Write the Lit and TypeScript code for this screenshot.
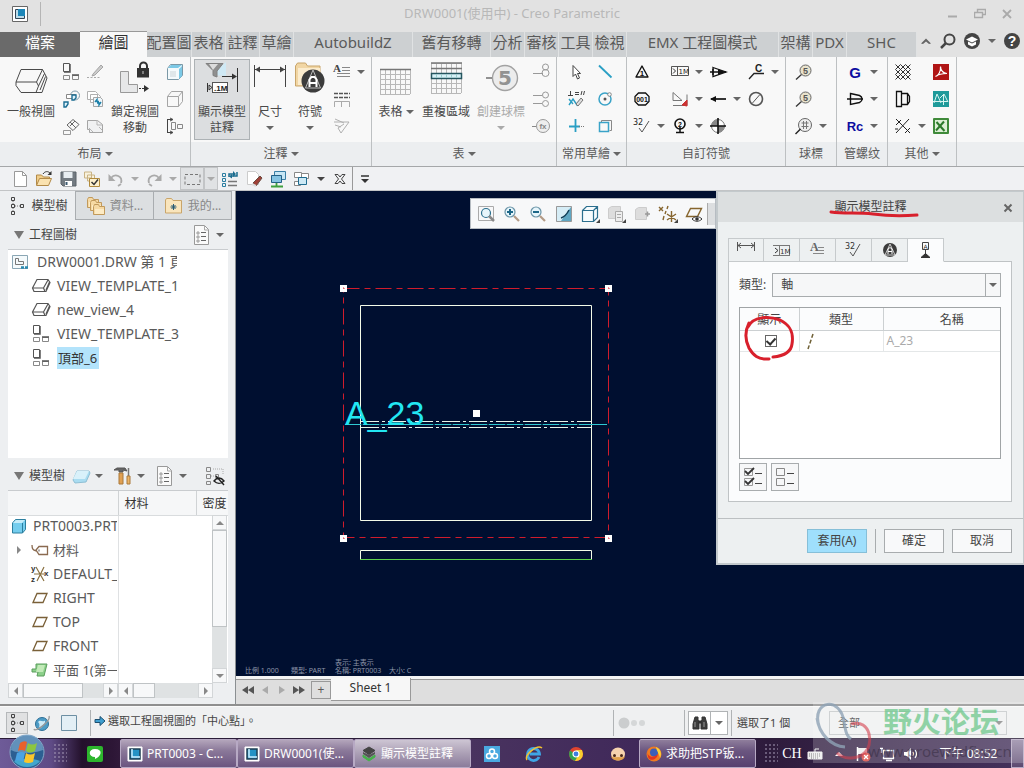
import { LitElement, html, css, svg, nothing } from "lit";
import { customElement, state } from "lit/decorators.js";

const pic = (w: number, h: number, body: unknown) =>
  html`<svg width=${w} height=${h} viewBox="0 0 ${w} ${h}" fill="none" stroke="#555" aria-hidden="true">${body}</svg>`;

const arrow = (color = "#666") => pic(8, 4, svg`<path d="M0 0h8l-4 4z" fill=${color} stroke="none"/>`);

const gridLines = (x0: number, y0: number, cols: number, rows: number, step: number) => {
  const w = cols * step;
  const h = rows * step;
  let d = "";
  for (let i = 0; i <= cols; i++) d += `M${x0 + i * step + 0.5} ${y0}v${h}`;
  for (let j = 0; j <= rows; j++) d += `M${x0} ${y0 + j * step + 0.5}h${w}`;
  return svg`<path d=${d} stroke="#b8b8b8"/>`;
};

const tanFolder = (x: number, y: number) => svg`<g transform="translate(${x} ${y})">
  <path d="M.5 2.500l1-2h4l1 2h5v8h-11z" fill="#f6d9a3" stroke="#c19a5c"/><path d="M2 5h9v5h-9z" fill="#fdebc4" stroke="none"/></g>`;

const big: Record<string, unknown> = {
  view: svg`<path d="M7 22l5-12.500h21.500l4.500 8.500-5 14.500h-21l-5-7zM7 22h20.500l6-12.500M27.500 22l2 4-2.500 6.500M29.500 26l6-12.500M31 30l5.500-13.500" stroke="#4a4a4a"/>`,
  lock: svg`<path d="M7.500 11.500h8v13h9v8h-17z" fill="#e6e7e8" stroke="#999"/>
    <path d="M27 9v-3a3.500 3.500 0 0 1 7 0v3" stroke="#333" stroke-width="2"/><path d="M24 8h12v9.500h-12z" fill="#333" stroke="none"/><path d="M30 11v3" stroke="#ccc"/>
    <path d="M26 28.500h6" stroke="#333" stroke-dasharray="2 1"/><path d="M31 25l5 3.500-5 3.500z" fill="#333" stroke="none"/>`,
  showAnno: svg`<path d="M12 15l14-13v14z" fill="#cfe9f5" stroke="none"/>
    <path d="M6 3.500h17l-6 7.500v6l-4-1.500v-5z" fill="#8f8f8f" stroke="#808080"/><path d="M9 4h9l-5 6z" fill="#dcdcdc" stroke="none"/>
    <path d="M22 16.500h14M37.500 8v24" stroke="#333"/><path d="M32 13.500l5 3-5 3z" fill="#333" stroke="none"/>
    <path d="M7.500 23v9M9 25l3 2.500-3 2.500z" stroke="#333"/><rect x="12.500" y="22.500" width="15" height="10" fill="#fff" stroke="#555"/>
    <text x="14" y="31" font-size="8" font-weight="700" fill="#222" stroke="none" font-family="Liberation Sans">.1M</text>`,
  dim: svg`<path d="M6.500 5v22M37.500 5v22M7 9.500h30" stroke="#444"/><path d="M7 9.500l5-3v6zM37 9.500l-5-3v6z" fill="#444" stroke="none"/>`,
  symbol: svg`<path d="M7.500 26v-20l2-3h8l2 3h12.500v20z" fill="#f1d6a4" stroke="#c9a56a"/><path d="M10 8h22v17h-22z" fill="#fbecce" stroke="none"/>
    <circle cx="25" cy="21" r="11.500" fill="#3c3c3c" stroke="none"/><path d="M25 10l7.500 18h-15z" fill="#3c3c3c" stroke="#bbb"/>
    <path d="M21.500 27v-7.500l2-2.500h3l2 2.500v7.500M21.500 23h7" stroke="#fff" stroke-width="2"/>`,
  table: svg`${gridLines(6, 9, 6, 5, 5)}<path d="M6 9.500h31" stroke="#777" stroke-width="1.500"/>`,
  region: svg`${gridLines(7, 3, 6, 6, 5)}<path d="M7 3h31M7 8.500h31" stroke="#777" stroke-width="1.500"/><rect x="7.500" y="13.500" width="30" height="5" fill="#d6f1f7" stroke="#25555f" stroke-width="1.500"/><path d="M12.500 14v4M17.500 14v4M22.500 14v4M27.500 14v4M32.500 14v4" stroke="#9cc"/>`,
  balloon: svg`<circle cx="26" cy="18" r="12.500" fill="#ececec" stroke="#a2a2a2" stroke-width="1.400"/><path d="M7 18h6" stroke="#777" stroke-width="1.600"/>
    <text x="26" y="25" font-size="20" font-weight="700" fill="#929292" stroke="none" text-anchor="middle" font-family="DejaVu Sans">5</text>`,
};

const txt = (x: number, y: number, size: number, fill: string, s: string) =>
  svg`<text x=${x} y=${y} font-size=${size} font-weight="700" fill=${fill} stroke="none" text-anchor="middle" font-family="Liberation Sans">${s}</text>`;

const small: Record<string, unknown> = {
  proj: svg`<path d="M2.500 1.500h6v8h-6z"/><path d="M2.500 13.500h6v4h-6zM11.500 13.500h6v4h-6z" stroke="#888"/><path d="M9 2v8h-6M11 13h7" stroke="#555" stroke-width="1.500"/>`,
  pencil: svg`<path d="M2 15.500h14" stroke="#aaa" stroke-dasharray="2 1.500"/><path d="M8 12l8-9 2 2-8 8-3 1z" fill="#ccc" stroke="#a5a5a5"/>`,
  detail: svg`<circle cx="14" cy="6.500" r="4.500" stroke="#7b9aab"/><path d="M5.500 5.500h9v4h-9z" fill="#fff" stroke="#888"/><path d="M11 6h4v3l-2 2h-2zM3 13h4v2l-2 3h-2z" fill="#dff2fa" stroke="#1b6d93" stroke-width="1.400"/>`,
  sheets: svg`<path d="M2.500 2.500h8l2 2v6h-10zM5.500 5.500h8l2 2v6h-10z" fill="#fff" stroke="#b0b0b0"/><path d="M8.500 8.500h7l2 2v7h-9z" fill="#eef6fa" stroke="#a5a5a5"/><path d="M10 13l2-2.500v2h2M16 13l-2 3v-2h-2" stroke="#1b7fa8" stroke-width="1.400"/>`,
  aux: svg`<path d="M12 3.500l6 5-6 6-6-5.500zM9 6l6 6M14 5l-5 5" stroke="#666"/><path d="M2.500 14.500h7v4h-7z" stroke="#999"/>`,
  erase: svg`<path d="M2.500 4.500h10l5 4v8h-13v-3h-2z" fill="#f0f1f2" stroke="#a5a5a5"/><path d="M12 4v5h5M4 12l4 4M14 11l3 3" stroke="#b5b5b5"/>`,
  cubeB: svg`<path d="M2.500 6.500l3-4h12v11l-4 4h-11z" fill="#f4fafc" stroke="#7b98a6"/><path d="M3 6l3-3h11l-4 3zM14 7l3-3v10l-3 3z" fill="#7cc9e6" stroke="none"/><path d="M5 9h6v6h-6z" fill="#dfe7ea" stroke="none"/>`,
  cube: svg`<path d="M2.500 7.500l4-5h11v10l-4 5h-11zM2.500 7.500h11v10M13.500 7.500l4-5" stroke="#a5a5a5"/>`,
  align: svg`<path d="M2.500 3v14M2 3.500h5M2 16.500h5M5 2l3 1.500-3 1.500M5 15l3 1.500-3 1.500" stroke="#444"/><path d="M6.500 6.500h4v7h-4zM12.500 8.500h5v4h-5z" stroke="#888"/>`,
  note: svg`<text x="1" y="10" font-size="11" font-weight="700" fill="#444" stroke="none" font-family="Liberation Serif">A</text><path d="M10 5.500h8M10 8.500h8M5 11.500h13M5 14.500h13" stroke="#888"/>`,
  tbl: svg`<path d="M2 4.500h16M2 8.500h16" stroke="#555" stroke-width="1.500" stroke-dasharray="4 1"/><path d="M2.500 18v-5.500h15v5.500M9.500 13v5" stroke="#aaa"/>`,
  surf: svg`<path d="M2 6h15l-8 11-3-5 6-4M3 3l9 4M3 9l6 2" stroke="#b0b0b0"/>`,
  b1: svg`<path d="M1 11.500h10" stroke="#999"/><circle cx="13.500" cy="5" r="3" stroke="#999"/><circle cx="13.500" cy="11" r="3.500" stroke="#999"/>`,
  b2: svg`<path d="M1 6.500h9M1 14.500h9" stroke="#999"/><circle cx="13.500" cy="6" r="3" stroke="#999"/><circle cx="13.500" cy="14.500" r="3" stroke="#999"/>`,
  b3: svg`<path d="M0 10.500h4" stroke="#888"/><circle cx="11" cy="10" r="6.500" fill="#eee" stroke="#999"/>${txt(11, 13, 8, "#888", "fx")}`,
  cursor: svg`<path d="M7 3.500v11l2.500-2.500 2 5 2-1-2-4.500h3z" fill="#fff" stroke="#444"/>`,
  line: svg`<path d="M4 3.500l12.500 12" stroke="#2a9fc4" stroke-width="1.800"/>`,
  constr: svg`<path d="M2 6.500h5M4.500 2v4M9 3.500h4M9 5.500h4M15 6l1-4M17.500 6l1-4" stroke="#444"/><path d="M3 16l4-6 4 6 2-4M3 10l4 5" stroke="#2a9fc4" stroke-width="1.400"/><path d="M10 15l5-6 2 2-5 6z" fill="#ddd" stroke="#777"/>`,
  circ: svg`<circle cx="10" cy="10" r="6" stroke="#3aa3c8" stroke-width="1.500"/><circle cx="10" cy="10" r="1.500" fill="#555" stroke="none"/><circle cx="14.500" cy="5.500" r="1.800" fill="#f8f8f8" stroke="#888"/>`,
  cross: svg`<path d="M9.500 3v13M3 10.500h11" stroke="#2a9fc4" stroke-width="1.800"/><path d="M13 10.500h6" stroke="#777" stroke-dasharray="1 1"/>`,
  sq: svg`<path d="M4.500 6.500h9v9h-9z" stroke="#3aa3c8" stroke-width="1.500"/><path d="M6.500 6v-1.500h10v10h-2" stroke="#888"/>`,
  tri1: svg`<path d="M10 4l6 11h-12z" stroke="#111" stroke-width="1.400" stroke-linejoin="round"/>${txt(10, 14, 8, "#111", "1")}`,
  c001: svg`<path d="M6.500 4h7l3.500 3.500v5l-3.500 3.500h-7l-3.500-3.500v-5z" stroke="#111" stroke-width="1.300"/>${txt(10, 13, 7, "#111", "001")}`,
  s32: svg`<text x="1" y="9" font-size="8" fill="#222" stroke="none" font-family="DejaVu Sans">32</text><path d="M7 12l3 4 7-11" stroke="#555"/>`,
  gtol: svg`<path d="M1.500 4.500h17v9h-17zM7.500 5v8" stroke="#555"/><path d="M3 6.500l2.500 2.500-2.500 2.500" stroke="#333"/><text x="8.500" y="12" font-size="7" fill="#222" stroke="none" font-family="DejaVu Sans">1M</text>`,
  corner: svg`<path d="M3 3.500l9 8h-9zM3 16.500h14v-11" stroke="#777"/><path d="M12 16l5-5v6z" fill="#c33" stroke="#c33"/>`,
  datum: svg`<circle cx="10" cy="8" r="5" stroke="#111" stroke-width="1.600"/><path d="M6 16.500h8M10 11v5" stroke="#111" stroke-width="1.500"/>${txt(10, 11, 7, "#111", "2")}`,
  arr3: svg`<path d="M2 10h16M5 7v6" stroke="#111" stroke-width="1.500"/><path d="M5 5.500l13 4.500-13 4.500z" stroke="#111" stroke-width="1.300"/><path d="M10 7l7 3-7 3z" fill="#111" stroke="none"/>`,
  arrL: svg`<path d="M3 10h15" stroke="#111" stroke-width="1.700"/><path d="M2 10l6-3v6z" fill="#111" stroke="none"/>`,
  target: svg`<circle cx="10" cy="10" r="6.500" fill="#fff" stroke="#777"/><path d="M10 3.500a6.500 6.500 0 0 0-6.500 6.500h6.500zM10 16.500a6.500 6.500 0 0 0 6.500-6.500h-6.500z" fill="#888" stroke="none"/><path d="M10 2v16M2 10h16" stroke="#111" stroke-width="1.600"/>`,
  clead: svg`<path d="M3 17l5-5.500h10" stroke="#222" stroke-width="1.300"/><text x="9" y="10" font-size="10" font-weight="700" fill="#222" stroke="none" font-family="Liberation Sans">C</text>`,
  diam: svg`<circle cx="10" cy="10" r="6.500" stroke="#555" stroke-width="1.600"/><path d="M6.500 14l7-8" stroke="#555"/>`,
  mag5: svg`<circle cx="11.500" cy="8.500" r="5.500" fill="#e9e3cd" stroke="#666"/><path d="M7.500 12.500l-5.500 5" stroke="#333" stroke-width="1.300"/>${txt(11.5, 12, 9, "#555", "5")}`,
  magh: svg`<circle cx="11" cy="9" r="6.500" fill="#eee" stroke="#666"/><path d="M6.500 13l-5 5" stroke="#222" stroke-width="1.500"/><path d="M7.500 7h7M7.500 10.500h7M9.500 5v8M12.500 5v8" stroke="#777"/>`,
  g: txt(10, 15.5, 15, "#0d0da0", "G"),
  cone: svg`<path d="M2 10h16" stroke="#111" stroke-width="1.500"/><path d="M5.500 4.500l9 2a5 4 0 0 1 0 7l-9 2z" stroke="#111" stroke-width="1.400"/>`,
  rc: txt(10, 15, 13, "#0d0da0", "Rc"),
  hatch: svg`<path d="M2.500 7.500l5-5M2.500 12.500l10-10M2.500 17.500l15-15M7.500 17.500l10-10M12.500 17.500l5-5M12.500 2.500l5 5M7.500 2.500l10 10M2.500 2.500l15 15M2.500 7.500l10 10M2.500 12.500l5 5" stroke="#333"/>`,
  plate: svg`<path d="M3.500 2.500h5v15h-5zM8.500 4.500h6l2 3v5l-2 3h-6M14.500 5v10" stroke="#111" stroke-width="1.300"/>`,
  multi: svg`<path d="M3 9l5-5M3 17l13-14M12 17l5-5M3 3l5 5M8 8l9 9" stroke="#222"/><path d="M2 13h3" stroke="#222"/>`,
  pdf: svg`<rect x="2" y="2" width="16" height="16" fill="#b01515" stroke="none"/><path d="M4.500 14.500c3-1 5.500-5 5-10 0 4 3 7 6.500 7-4 0-8 .5-11.500 3" stroke="#fff" stroke-width="1.200"/>`,
  teal: svg`<rect x="2" y="2" width="16" height="16" fill="#1e9a9a" stroke="none"/><path d="M3 14l3-9 4 9M2 12.500h15M12.500 5v11M9 9l4-4 4 8" stroke="#d5f4f0"/>`,
  xls: svg`<rect x="2" y="2" width="16" height="16" rx="1" fill="#3f8a3a" stroke="none"/><path d="M4 4h12v12h-12z" fill="#dcefd5" stroke="none"/><path d="M5.500 6l8 9M13 5.500l-8 9" stroke="#2c7a2b" stroke-width="2"/>`,
  newDoc: svg`<path d="M4.500 2.500h8l4 4v11h-12z" fill="#fff" stroke="#999"/><path d="M12.500 2.500v4h4" stroke="#999"/>`,
  open: svg`<path d="M2.500 16v-10h5l2 2h6v2" fill="#f0cd8a" stroke="#b28a48"/><path d="M2.500 16.500l3-7h12l-3 7z" fill="#fae2b0" stroke="#b28a48"/><path d="M9 5c2-3 5-3 7-1" stroke="#333"/><path d="M17.500 2v4h-4z" fill="#333" stroke="none"/>`,
  save: svg`<path d="M3 3h15v14h-13l-2-2z" fill="#737b82" stroke="#5a6268"/><path d="M5.500 3h9v6h-9z" fill="#e8eef2" stroke="none"/><path d="M7 12h7v5h-7z" fill="#fff" stroke="none"/><path d="M8.500 13v3" stroke="#3c5a70" stroke-width="2"/>`,
  saveAs: svg`<path d="M2.500 9v-6h7v6zM5.500 12v-6h7v6z" fill="#f8f1dd" stroke="#c9b384"/><path d="M7.500 9.500h10v8h-10z" fill="#fdf0cc" stroke="#b08a3d"/><path d="M9.500 13l2.500 2.500 4-5" stroke="#333" stroke-width="1.500"/>`,
  undo: svg`<path d="M5 9c4-5 12-2 10 5M15 15l-3 2" stroke="#aaa" stroke-width="1.800"/><path d="M2.500 5v7h7z" fill="#aaa" stroke="none"/>`,
  redo: svg`<path d="M15 9c-4-5-12-2-10 5M5 15l3 2" stroke="#aaa" stroke-width="1.800"/><path d="M17.500 5v7h-7z" fill="#aaa" stroke="none"/>`,
  marquee: svg`<path d="M3 5.500h15v10h-15z" stroke="#777" stroke-dasharray="3 2"/>`,
  regen: svg`<path d="M2.500 4.500h3v3h-3zM2.500 9.500h3v3h-3zM2.500 14.500h3v3h-3z" stroke="#2a7da0"/><path d="M9 8v-3h5M17 3v4h-5" stroke="#1d6d90" stroke-width="1.500"/><path d="M13 2l3 3-3 3zM12 5l-3 2.500 3 2z" fill="#1d6d90" stroke="none"/><path d="M8 12.500h9M8 16.500h9" stroke="#777" stroke-width="1.500"/>`,
  rub: svg`<path d="M3.500 2.500h8l3 3v10h-11z" fill="#fff" stroke="#ccc"/><path d="M9 14l7-7 2 2-6 8z" fill="#a04038" stroke="#6b4a40"/><path d="M8 15l4 2" stroke="#ddd" stroke-width="2"/>`,
  win: svg`<path d="M6.500 2.500h11v8h-11z" fill="#c8e6f4" stroke="#3a7fa5"/><path d="M3.500 6.500h10v7h-10z" fill="#85c3e2" stroke="#235f85"/><path d="M8.500 14v3M3 17.500h12" stroke="#3d9f3d" stroke-width="1.800"/>`,
  winds: svg`<path d="M2.500 3.500h7v5h-7zM2.500 12.500h6v4h-6z" fill="#fff" stroke="#888"/><path d="M9.500 4.500h7v5h-7z" fill="#fff" stroke="#888"/><path d="M6.500 8.500h8v7h-8z" fill="#cde9f5" stroke="#1f6c90"/>`,
  closeW: svg`<path d="M5 5.500h3l2 2.500 2-2.500h3l-3.500 4.500 3.500 4.500h-3l-2-2.500-2 2.500h-3l3.500-4.500z" stroke="#444"/>`,
  more: svg`<path d="M6 7h8" stroke="#333" stroke-width="1.500"/><path d="M6 10h8l-4 4z" fill="#333" stroke="none"/>`,
  tree: svg`<path d="M4.500 1.500h3v3h-3zM4.500 8.500h3v3h-3zM4.500 15.500h3v3h-3zM13.500 8.500h3v3h-3z" stroke="#444"/><path d="M6 5v3M6 12v3M8 10h5" stroke="#777" stroke-dasharray="1 1"/>`,
  folders: svg`${tanFolder(1, 1)}${tanFolder(4, 4)}${tanFolder(7, 8)}`,
  fav: svg`<path d="M1.500 17v-13l1-1.500h5l1.500 2h8.500v12.500z" fill="#f9e5bc" stroke="#c9a56a"/><path d="M9.500 8v6M6.500 11h6M7.500 9l4 4M11.500 9l-4 4" stroke="#275a75"/>`,
  list: svg`<path d="M2.500 .5h10l4 4v15h-14z" fill="#fafafa" stroke="#999"/><path d="M12.500 1v4h4" stroke="#aaa"/><path d="M9 7.500h5M9 11.500h5M9 15.500h5" stroke="#666"/><path d="M5 7h2v2h-2zM5 11h2v2h-2zM5 15h2v2h-2z" stroke="#888" stroke-width=".8"/>`,
  drw: svg`<path d="M2.500 3.500h15v13h-15z" fill="#f4fafc" stroke="#8aa6b4"/><path d="M5.500 6.500h3v3h5v3h-8z" stroke="#777"/><path d="M11 15.500h7" stroke="#2a8ab0" stroke-width="2.500" stroke-dasharray="3 1"/>`,
  vbox: svg`<path d="M1.500 12l4.500-8.500h11l2 3-4 9h-12zM2 12h10.500l4.500-8M12.500 12l1.500 3.500M15 14l3.500-8" stroke="#555" stroke-width="1.200"/>`,
  solid: svg`<path d="M2 14l4-9h12l1 2-4 9-11 1z" fill="#a9dcf1" stroke="#8fbfd4"/><path d="M6 5h12l-4 8h-12z" fill="#d9f1fa" stroke="none"/>`,
  tools: svg`<path d="M1 4l3-2h8l2 3-4-1v2h-4v-2h-3z" fill="#666" stroke="#555"/><path d="M6 7h4v11h-4z" fill="#e0a052" stroke="#a9793a"/><path d="M15.500 2v8" stroke="#777" stroke-width="1.500"/><path d="M14 10h3v8h-3z" fill="#ecb568" stroke="#a9793a"/>`,
  treeEye: svg`<path d="M1.500 1.500h4v4h-4zM1.500 8.500h4v4h-4zM1.500 15.500h4v3h-4zM10.500 8.500h3v3h-3z" stroke="#888"/><path d="M6 10h4M8 3h10M18 3v6" stroke="#aaa" stroke-dasharray="1 1"/><path d="M9 15c3-4 7-4 10 0-3 3-7 3-10 0zM11 10l8 9" stroke="#222" stroke-width="1.400"/>`,
  part: svg`<path d="M3.500 7l3-3.500h10v10l-3 3.500h-10z" fill="#74cdee" stroke="#2c7f9f"/><path d="M4 7l3-3h9l-3 3z" fill="#c5ecf9" stroke="none"/><path d="M13.500 7v10" stroke="#2c7f9f"/>`,
  mat: svg`<path d="M2 5c0 4 1 5 4 6M6 10l3-3.500h8.500v8h-8.500z" stroke="#8a6a50" stroke-width="1.300"/><path d="M9 9.500v2" stroke="#555"/>`,
  csys: svg`<path d="M6 3l8 14M14 3l-7 14M4 10h11" stroke="#8a7040" stroke-width="1.200"/><text x="1" y="7" font-size="8" font-weight="700" fill="#333" stroke="none" font-family="Liberation Sans">y</text><text x="14" y="12" font-size="8" font-weight="700" fill="#333" stroke="none" font-family="Liberation Sans">x</text><text x="1" y="18" font-size="8" font-weight="700" fill="#333" stroke="none" font-family="Liberation Sans">z</text>`,
  plane: svg`<path d="M3 14.500l4-9h10l-4 9z" stroke="#7a6038" stroke-width="1.300"/>`,
  flat: svg`<path d="M6 4h11l-3 12h-7l1-4h-6v-3h4z" fill="#8cd08a" stroke="#5a9d5c"/><path d="M8 5h7l-2 7h-7z" fill="#c2eab8" stroke="none"/>`,
};

const sm = (n: string) => html`<svg width="20" height="20" viewBox="0 0 20 20" fill="none" stroke="#555" aria-hidden="true">${small[n]}</svg>`;
const lg = (n: string) => html`<svg width="44" height="40" viewBox="0 0 44 40" fill="none" stroke="#555" aria-hidden="true">${big[n]}</svg>`;

const base = css`
  * { box-sizing: border-box; }
  button, select, input {
    font: inherit; color: inherit; margin: 0; padding: 0; border: 0; border-radius: 0; background: none;
  }
  button { display: flex; align-items: center; justify-content: center; white-space: nowrap; flex: none; }
  svg { display: block; flex: none; }
`;

type Cell = [string, boolean?];
type Item =
  | { big: string; w: string; lines: string[]; drop?: "inline" | "below"; on?: boolean; off?: boolean }
  | { col: (Cell | null)[]; drops?: boolean };

const groups: { name: string; drop: boolean; pad: string; items: Item[] }[] = [
  { name: "布局", drop: true, pad: "p3", items: [
    { big: "view", w: "w56", lines: ["一般視圖"] },
    { col: [["proj"], ["detail"], ["aux"]] },
    { col: [["pencil"], ["sheets"], ["erase"]] },
    { big: "lock", w: "w56", lines: ["鎖定視圖", "移動"] },
    { col: [["cubeB"], ["cube"], ["align"]] },
  ] },
  { name: "注釋", drop: true, pad: "p3", items: [
    { big: "showAnno", w: "w56", lines: ["顯示模型", "註釋"], on: true },
    { big: "dim", w: "w40", lines: ["尺寸"], drop: "below" },
    { big: "symbol", w: "w40", lines: ["符號"], drop: "below" },
    { col: [["note", true], ["tbl"], ["surf"]], drops: true },
  ] },
  { name: "表", drop: true, pad: "p0", items: [
    { big: "table", w: "w48", lines: ["表格"], drop: "inline" },
    { big: "region", w: "w52", lines: ["重複區域"] },
    { big: "balloon", w: "w60", lines: ["創建球標"], drop: "below", off: true },
    { col: [["b1"], ["b2"], ["b3"]] },
  ] },
  { name: "常用草繪", drop: true, pad: "p8", items: [
    { col: [["cursor"], ["constr"], ["cross"]] },
    { col: [["line"], ["circ"], ["sq"]] },
  ] },
  { name: "自訂符號", drop: false, pad: "p3", items: [
    { col: [["tri1"], ["c001"], ["s32", true]], drops: true },
    { col: [["gtol", true], ["corner", true], ["datum", true]], drops: true },
    { col: [["arr3"], ["arrL", true], ["target"]], drops: true },
    { col: [["clead", true], ["diam"], null], drops: true },
  ] },
  { name: "球標", drop: false, pad: "p6", items: [{ col: [["mag5"], ["mag5"], ["magh", true]], drops: true }] },
  { name: "管螺纹", drop: false, pad: "p6", items: [{ col: [["g", true], ["cone", true], ["rc", true]], drops: true }] },
  { name: "其他", drop: true, pad: "p3", items: [
    { col: [["hatch"], ["plate"], ["multi", true]], drops: true },
    { col: [["pdf"], ["teal"], ["xls"]] },
  ] },
];

const tabs: [string, string][] = [
  ["檔案", "t80 file"], ["繪圖", "t67 cur"], ["配置圖", "t45"], ["表格", "t34"], ["註釋", "t34"], ["草繪", "t34"],
  ["AutobuildZ", "t118"], ["舊有移轉", "t78"], ["分析", "t34"], ["審核", "t34"], ["工具", "t34"], ["檢視", "t34"],
  ["EMX 工程圖模式", "t152"], ["架構", "t34"], ["PDX", "t34"], ["SHC", "t70"],
];

const quick: [string, string][] = [
  ["i", "newDoc"], ["i", "open"], ["i", "save"], ["i", "saveAs"], ["i", "undo"], ["d", "#aaa"], ["i", "redo"], ["d", "#aaa"],
  ["i on", "marquee"], ["d on", "#aaa"], ["i", "regen"], ["i", "rub"], ["i", "win"], ["i", "winds"], ["d", "#444"], ["i", "closeW"],
  ["sep", ""], ["i", "more"],
];

const viewTools = [
  svg`<path d="M2.500 2.500h15v14h-15z" stroke="#aaa"/><circle cx="10" cy="9" r="4.500" fill="#e6f5fb" stroke="#2b6f8e" stroke-width="1.200"/><path d="M13 12l5 5" stroke="#888" stroke-width="2.500"/>`,
  svg`<circle cx="8" cy="8" r="5" fill="#e6f5fb" stroke="#6b95a8" stroke-width="1.200"/><path d="M8 5v6M5 8h6" stroke="#1c6788" stroke-width="2"/><path d="M12 12l5 5" stroke="#b39a86" stroke-width="2.200"/>`,
  svg`<circle cx="8" cy="8" r="5" fill="#e6f5fb" stroke="#6b95a8" stroke-width="1.200"/><path d="M5 8h6" stroke="#1c6788" stroke-width="2"/><path d="M12 12l5 5" stroke="#b39a86" stroke-width="2.200"/>`,
  svg`<path d="M2.500 2.500h15v15h-15z" fill="#5fa6c2" stroke="#999"/><path d="M3 3h14l-3 4-7 10h-4z" fill="#d6edf6" stroke="none"/><path d="M7 14c3-1 6-4 8-8" stroke="#123f57" stroke-width="1.500"/>`,
  svg`<path d="M2.500 6.500l4-4h11v11l-4 4h-11zM2.500 6.500h11v11M13.500 6.500l4-4" fill="#f6fbfd" stroke="#2b6f8e" stroke-width="1.200"/><path d="M20 15v4h-4z" fill="#444" stroke="none"/>`,
  svg`<path d="M2.500 4.500l3-2h9v12h-12z" fill="#ddd" stroke="#ccc"/><path d="M9.500 7.500h7v10h-7zM11 10.500h4M11 13.500h4" fill="#eee" stroke="#aaa"/><path d="M20 15v4h-4z" fill="#444" stroke="none"/>`,
  svg`<path d="M3.500 5.500l3-2h8v12h-11z" fill="#ddd" stroke="#ccc"/><path d="M13 10h5M15.500 7.500v5" stroke="#999" stroke-width="1.500"/>`,
  svg`<path d="M1 3l4 4M5 3l-4 4M10 2l-1 3M8 7l-1 3M6 12l-1 4M9 16l9-6M9 10l9 6M13.500 7v11" stroke="#86652e" stroke-width="1.400"/><path d="M20 15v4h-4z" fill="#444" stroke="none"/>`,
  svg`<path d="M2.500 12.500l4-8h11l-4 8z" stroke="#86652e" stroke-width="1.400"/><path d="M8 15c3-3 7-3 10 0-3 3-7 3-10 0z" fill="#fff" stroke="#333"/><circle cx="13" cy="15" r="1.800" fill="#333" stroke="none"/>`,
];

@customElement("annotation-dialog")
class AnnotationDialog extends LitElement {
  static styles = [base, css`
    :host { display: flex; flex-direction: column; background: #edf0f1; border: 2px solid #c3c9cc; border-top-width: 1px; border-right-width: 1px; color: #444; font-size: 12px; line-height: 16px; }
    .title { display: grid; grid-template-columns: 1fr; align-items: center; height: 30px; background: #dcdfe0; position: relative; }
    h2 { margin: 0; font-size: 12px; font-weight: 400; text-align: center; }
    .x { position: absolute; right: 9px; top: 10px; width: 12px; height: 12px; }
    .content { padding: 16px 11px 16px 10px; border-bottom: 1px solid #bcc0c2; }
    .tabs { display: flex; margin-bottom: -1px; position: relative; }
    .tabs button { width: 36px; height: 24px; border: 1px solid #c6cacc; border-left-width: 0; }
    .tabs button:first-child { border-left-width: 1px; }
    .tabs .on { background: #fbfcfd; border-bottom-color: #fbfcfd; }
    .pane { border: 1px solid #bfc3c5; background: #fbfcfd; padding: 11px 10px 10px; }
    .row { display: flex; align-items: center; gap: 6px; }
    .pick { flex: 1; position: relative; display: flex; border: 1px solid #a8acae; background: #f6f7f8; }
    select { appearance: none; flex: 1; height: 22px; padding-left: 8px; }
    .pick span { position: absolute; right: 0; top: 0; bottom: 0; width: 15px; border-left: 1px solid #a8acae; display: grid; place-items: center; pointer-events: none; }
    .box { margin-top: 10px; height: 152px; border: 1px solid #a0a4a6; background: #fff; }
    table { width: 100%; border-collapse: collapse; table-layout: fixed; }
    th { font-weight: 400; height: 22px; padding: 2px 0 0; border-bottom: 1px solid #ccd0d2; border-right: 1px solid #ccd0d2; background: #fbfcfd; }
    td { height: 21px; padding: 0 0 0 3px; border-right: 1px solid #e4e7e8; border-bottom: 1px solid #e4e7e8; color: #aaa; }
    th:last-child, td:last-child { border-right: 0; }
    th:last-child { padding-left: 20px; }
    .c1 { width: 59px; }
    .c2 { width: 84px; }
    input { appearance: none; display: grid; place-items: center; width: 12px; height: 12px; margin: 0 auto; border: 1px solid #666; background: #fff; }
    input:checked::after { content: ""; width: 4px; height: 7px; margin-bottom: 2px; border: solid #333; border-width: 0 2px 2px 0; transform: rotate(42deg); }
    .pair { display: flex; gap: 4px; margin-top: 4px; }
    .pair button { width: 28px; height: 28px; border: 1px solid #a8acae; background: #f6f7f8; }
    .foot { display: flex; justify-content: flex-end; gap: 8px; padding: 10px 11px 10px; }
    .foot button { width: 60px; height: 24px; border: 1px solid #a8acae; background: #f8f9fa; }
    .foot .go { background: #9fdffc; border-color: #86bfd8; }
    .foot i { width: 1px; background: #a8acae; }
    .ink { position: absolute; left: 0; top: 0; pointer-events: none; }
  `];

  @state() private tab = 5;

  render() {
    const tabIcons = [
      svg`<path d="M1.500 2v9M18.500 2v9M2 5.500h16M5 3l-3 2.500 3 2.500M15 3l3 2.500-3 2.500" stroke="#555"/>`,
      svg`<path d="M1 5.500h17M1 15.500h17M7.500 6v9M17.500 6v9" stroke="#777"/><path d="M3 8l3 2.500-3 2.500" stroke="#333"/><text x="8" y="14" font-size="7" fill="#333" stroke="none" font-family="DejaVu Sans">1M</text>`,
      svg`<text x="2" y="11" font-size="12" font-weight="700" fill="#666" stroke="none" font-family="Liberation Serif">A</text><path d="M10 7.500h6M10 10.500h6M5 13.500h11" stroke="#888"/>`,
      svg`<text x="1" y="9" font-size="8" fill="#333" stroke="none" font-family="DejaVu Sans">32</text><path d="M6 12l3 4 7-12" stroke="#555"/>`,
      svg`<circle cx="10" cy="10" r="7" fill="#3c3c3c" stroke="none"/><path d="M10 4l5 11h-10z" fill="#3c3c3c" stroke="#ccc"/><path d="M8 14v-5l2-1.500 2 1.500v5M8 11.500h4" stroke="#fff"/>`,
      svg`<path d="M6.500 2.500h6v7h-6zM9.500 10v4" stroke="#444"/><path d="M5 17.500l4.500-4 4.500 4z" fill="#333" stroke="#333"/><text x="7.500" y="8.500" font-size="6" fill="#333" stroke="none" font-family="DejaVu Sans">A</text>`,
    ];
    return html`
      <div class="title"><h2>顯示模型註釋</h2>
        <button class="x" aria-label="關閉">${pic(10, 10, svg`<path d="M1.500 1.500l7 7M8.500 1.500l-7 7" stroke="#666" stroke-width="2"/>`)}</button></div>
      <div class="content">
        <div class="tabs">${tabIcons.map((t, i) => html`<button class=${i === this.tab ? "on" : ""} @click=${() => (this.tab = i)}>${pic(20, 20, t)}</button>`)}</div>
        <div class="pane">
          <div class="row"><label for="kind">類型:</label>
            <div class="pick"><select id="kind"><option>軸</option></select><span>${arrow()}</span></div></div>
          <div class="box"><table>
            <thead><tr><th class="c1"><label for="show">顯示</label></th><th class="c2">類型</th><th>名稱</th></tr></thead>
            <tbody><tr><td><input id="show" type="checkbox" checked></td>
              <td>${pic(16, 18, svg`<path d="M10 2l-5 15" stroke="#6f6035" stroke-width="1.500" stroke-dasharray="4 2"/>`)}</td><td>A_23</td></tr></tbody>
          </table></div>
          <div class="pair">
            <button aria-label="全選">${pic(22, 22, svg`<path d="M2.500 2.500h8v7h-8zM2.500 12.500h8v7h-8z" stroke="#999"/><path d="M3 5l3 3 6-6M3 15l3 3 6-6" stroke="#333" stroke-width="1.800"/><path d="M13 7.500h7M13 17.500h7" stroke="#444"/>`)}</button>
            <button aria-label="全不選">${pic(22, 22, svg`<path d="M2.500 2.500h8v7h-8zM2.500 12.500h8v7h-8z" stroke="#888"/><path d="M13 7.500h7M13 17.500h7" stroke="#444"/>`)}</button>
          </div>
        </div>
      </div>
      <div class="foot"><button class="go">套用(A)</button><i></i><button>確定</button><button>取消</button></div>
      <div class="ink">${pic(300, 190, svg`<path d="M113 20c14 2 27 0 42 2s30 2 44 1" stroke="#d8202c" stroke-width="3" stroke-linecap="round"/>
        <path d="M31 131c-4 8-4 17 0 25 4 7 9 12 20 11M55 165c10-1 18-4 19-13 2-12-2-19-12-24-11-4-27-4-32 7" stroke="#d8202c" stroke-width="3" stroke-linecap="round"/>`)}</div>`;
  }
}

@customElement("task-bar")
class TaskBar extends LitElement {
  static styles = [base, css`
    :host { display: flex; align-items: stretch; height: 30px; position: relative; color: #fff; font-size: 12px; line-height: 16px; border-top: 1px solid #2a1c38;
      background: linear-gradient(90deg, #6e5b98 0, #5f4b86 5%, #24112c 8%, #2d1636 11%, #5b3f66 20%, #49335f 46%, #40295a 62%, #2e1b3c 75%, #45325c 100%); }
    .orb { position: absolute; left: 8px; top: -5px; width: 38px; height: 36px; }
    .start { width: 50px; flex: none; }
    .dots { width: 14px; margin: 4px 3px; flex: none; background: radial-gradient(circle, #a79bb8 0 1px, transparent 1px) 0 0 / 4px 4px; opacity: .5; }
    .pin { width: 42px; }
    .line { width: 50px; }
    .task { width: 117px; padding-left: 6px; gap: 4px; justify-content: flex-start; border: 1px solid #b7a9c4; border-radius: 2px; overflow: hidden;
      background: linear-gradient(180deg, #b3a5bb 0, #8a7899 40%, #6b5580 100%); }
    .task.on { background: linear-gradient(180deg, #cdc5d3 0, #ab9fb5 50%, #8b7c9b 100%); }
    .task.dark { background: linear-gradient(180deg, #8f7e9c 0, #6b5680 40%, #57406f 100%); }
    .gap { flex: 1; }
    .tray { width: 24px; }
    .ch { font: 14px/16px "Liberation Serif", serif; width: 22px; }
    .clock { width: 69px; margin-left: 11px; }
    .desk { width: 13px; margin-left: 8px; border: 1px solid #b7a9c4; background: linear-gradient(180deg, #9486a4, #5c4a70); }
  `];

  render() {
    const creo = pic(16, 16, svg`<path d="M1 1h14v14h-14z" fill="#fff" stroke="#fff"/><path d="M3 3h10v10h-10z" fill="#2492c4" stroke="#1c3d52" stroke-width="1.500"/><path d="M5 3v8h8" stroke="#cdefff" stroke-width="1.500"/>`);
    return html`
      <div class="start"></div>
      <button class="orb" aria-label="開始">${pic(38, 36, svg`<circle cx="19" cy="18" r="17" fill="#2c5f92" stroke="#86a9c8"/><path d="M3 16a16 15 0 0 1 32 0c-9 3-22 5-32 0z" fill="#87b3d6" opacity=".6" stroke="none"/><path d="M6 27c6 8 20 8 26 0-7-3-19-3-26 0z" fill="#4ac4e8" opacity=".7" stroke="none"/>
        <path d="M12 9q4-3 7-1l-2 9q-4-2-7 0z" fill="#e8622b" stroke="none"/><path d="M20 9q4 3 9 0l-2 8q-5 3-9 0z" fill="#8cc63f" stroke="none"/><path d="M9 19q4-2 8 0l-2 9q-4-3-8-1z" fill="#4ba3e3" stroke="none"/><path d="M18 19q4 3 9 0l-2 9q-5 2-9 0z" fill="#fbc62c" stroke="none"/>`)}</button>
      <div class="dots"></div>
      <button class="line" aria-label="LINE">${pic(16, 16, svg`<rect width="16" height="16" rx="2" fill="#2db52d" stroke="none"/><path d="M8 3c8 0 7 7 0 10v-2c-7 0-7-8 0-8z" fill="#fff" stroke="none"/>`)}</button>
      <button class="task">${creo}PRT0003 - C...</button>
      <button class="task">${creo}DRW0001(使...</button>
      <button class="task on">${pic(16, 16, svg`<path d="M8 1l6 3.500-6 4-6-4z" fill="#444" stroke="#444"/><path d="M2 6v2l6 4 6-4v-2l-6 3z" fill="#555" stroke="none"/><path d="M2 9v2l6 4 6-4v-2l-6 4z" fill="#45b04a" stroke="#45b04a"/>`)}顯示模型註釋</button>
      <button class="pin">${pic(16, 16, svg`<rect width="16" height="16" fill="#4aa9e0" stroke="none"/><circle cx="8" cy="5.500" r="2.500" stroke="#fff" stroke-width="1.500"/><circle cx="5" cy="10" r="2.500" stroke="#fff" stroke-width="1.500"/><circle cx="11" cy="10" r="2.500" stroke="#fff" stroke-width="1.500"/>`)}</button>
      <button class="pin">${pic(18, 18, svg`<path d="M14 12a6 6 0 1 1 .5-3h-10" stroke="#3fa6e6" stroke-width="2.800"/><path d="M2 15c-3-5 10-16 15-12" stroke="#f2c230" stroke-width="1.500"/>`)}</button>
      <button class="pin">${pic(16, 16, svg`<circle cx="8" cy="8" r="7" fill="#e0442f" stroke="none"/><path d="M2 4.500a7 7 0 0 0 5 10.400l3-5z" fill="#33a350" stroke="none"/><path d="M15 8a7 7 0 0 1-8 7l4-7-3-4h6z" fill="#f8cf2f" stroke="none"/><circle cx="8" cy="8" r="3" fill="#3d7de0" stroke="#fff" stroke-width="1.200"/>`)}</button>
      <button class="pin">${pic(16, 16, svg`<ellipse cx="8" cy="8" rx="7" ry="6.500" fill="#f6d3ae" stroke="none"/><path d="M1 10c1 6 13 6 14 0-2 2-4 1-7 1s-5 1-7-1z" fill="#e0a04a" stroke="none"/><circle cx="4.500" cy="9.500" r="1.500" fill="#4a2a1a" stroke="none"/><circle cx="11.500" cy="9.500" r="1.500" fill="#4a2a1a" stroke="none"/>`)}</button>
      <button class="task dark">${pic(16, 16, svg`<circle cx="8" cy="8" r="7.500" fill="#ef7b22" stroke="none"/><circle cx="8" cy="6.500" r="4" fill="#3a5fb8" stroke="none"/><path d="M1 4c0 7 6 9 11 4-1 6-8 8-10 3z" fill="#e2361f" stroke="none"/><path d="M10 1c5 2 6 7 4 11-1-5-3-6-4-11z" fill="#fbd038" stroke="none"/>`)}求助把STP钣...</button>
      <div class="gap"></div>
      <div class="dots"></div>
      <button class="ch">CH</button>
      <button class="tray" aria-label="鍵盤">${pic(16, 16, svg`<path d="M1 6h14v7h-14z" fill="#eee" stroke="#eee"/><path d="M2 8h12M2 10h12M4 12h8" stroke="#777" stroke-dasharray="1 1"/><path d="M8 6v-3h4" stroke="#eee"/>`)}</button>
      <button class="tray" aria-label="更多圖示">${pic(8, 4, svg`<path d="M0 4h8l-4-4z" fill="#fff" stroke="none"/>`)}</button>
      <button class="tray">${pic(16, 16, svg`<path d="M2.500 1v14" stroke="#fff" stroke-width="1.500"/><path d="M3 2h9v6h-9z" fill="#eee" stroke="none"/><circle cx="11" cy="11" r="4.500" fill="#d8453e" stroke="none"/><path d="M9 9l4 4M13 9l-4 4" stroke="#fff" stroke-width="1.300"/>`)}</button>
      <button class="tray">${pic(16, 16, svg`<path d="M4.500 4.500h10v8h-10zM7 14.500h6M2.500 2v5M1 2.500h3" stroke="#fff" stroke-width="1.300"/>`)}</button>
      <button class="tray">${pic(16, 16, svg`<path d="M1 6h3l4-4v12l-4-4h-3z" fill="#fff" stroke="none"/><path d="M10 6q1.500 2 0 4M12 4q3 4 0 8" stroke="#fff" stroke-width="1.200"/>`)}</button>
      <button class="clock">下午 08:52</button>
      <button class="desk" aria-label="顯示桌面"></button>`;
  }
}

@customElement("app-root")
class AppRoot extends LitElement {
  static styles = [base, css`
    :host { display: flex; flex-direction: column; min-height: 100vh; overflow: hidden; background: #edeff1; color: #5a5a5a;
      font-family: "Noto Sans", "Noto Sans CJK TC", sans-serif; font-size: 12px; line-height: 16px; }
    .title { display: grid; grid-template-columns: 1fr auto 1fr; align-items: center; height: 31px; background: #e2e2e2; flex: none; }
    h1 { margin: 0 0 6px; font-size: 13px; line-height: 16px; font-weight: 400; color: #b8b8b8; }
    .logo { display: flex; align-items: center; padding-left: 12px; gap: 12px; padding-bottom: 3px; }
    .logo i { width: 1px; height: 24px; background: #b5b5b5; }
    .wins { display: flex; justify-content: flex-end; gap: 3px; padding: 0 5px 3px 0; }
    .wins button { width: 24px; height: 20px; }
    .tabs { display: flex; align-items: flex-end; height: 26px; background: #e2e2e2; font-size: 15px; line-height: 20px; flex: none; }
    .tabs .tab { height: 25px; background: #cdd0d2; border-right: 1px solid #e0e2e3; padding-bottom: 5px; overflow: hidden; }
    .tabs .file { background: #6a6a6a; color: #fff; border: 0; }
    .tabs .cur { background: #f8f8f8; height: 26px; border: 0; border-top: 1px solid #999; color: #333; }
    .t34 { width: 34px; } .t45 { width: 45px; } .t67 { width: 67px; } .t70 { width: 70px; } .t78 { width: 78px; }
    .t80 { width: 80px; } .t118 { width: 119px; } .t152 { width: 152px; }
    .helps { flex: 1; display: flex; align-items: center; justify-content: flex-end; height: 26px; padding: 0 4px 6px 0; gap: 8px; }
    .ribbon { display: flex; height: 110px; background: #f8f8f8; border-bottom: 1px solid #a5a7a9; flex: none; }
    .group { display: flex; flex-direction: column; border-right: 1px solid #bdc0c2; flex: none; }
    .body { display: flex; height: 85px; padding-top: 2px; }
    .p0 { padding-right: 2px; } .p3 { padding-left: 3px; padding-right: 3px; } .p6 { padding-left: 6px; padding-right: 6px; }
    .p8 { padding-left: 7px; padding-right: 9px; gap: 5px; }
    .cap { display: flex; align-items: center; justify-content: center; gap: 3px; height: 24px; background: #eceef0; white-space: nowrap; }
    .rest { flex: 1; display: flex; flex-direction: column; justify-content: flex-end; }
    .big { flex-direction: column; justify-content: flex-start; height: 81px; border: 1px solid transparent; color: #4a4a4a; }
    .big .ico { height: 44px; display: flex; }
    .big .lab { display: flex; align-items: center; gap: 3px; }
    .big .low { margin-top: 6px; }
    .big.on { background: #dcdee0; border-color: #adb2b5; }
    .big.off { color: #aaa; }
    .w40 { width: 40px; } .w48 { width: 48px; } .w52 { width: 52px; } .w56 { width: 56px; } .w60 { width: 58px; }
    .col { display: grid; grid-template-rows: repeat(3, 27px); grid-template-columns: 24px; flex: none; margin-top: -1px; }
    .col.dr { grid-template-columns: 24px 14px; }
    .col button { width: auto; }
    .quick { display: flex; align-items: stretch; height: 24px; padding-left: 8px; background: #f0f1f3; border-bottom: 1px solid #c2c4c6; flex: none; }
    .i { width: 24px; } .d { width: 14px; }
    .quick .on { background: #e0e2e4; border: 1px solid #c2c4c6; }
    .quick .sep { width: 1px; background: #999; }
    .main { flex: 1; display: flex; border-bottom: 2px solid #8f8f8f; min-height: 0; }
    .side { width: 236px; flex: none; display: flex; flex-direction: column; border-right: 1px solid #8b8f92; padding-bottom: 6px; }
    .stabs { display: flex; height: 29px; flex: none; padding-right: 3px; color: #888; }
    .stabs button { flex: 1; gap: 4px; background: #dcdfe1; border: 1px solid #a9adb0; border-left-width: 0; }
    .stabs button.cur { flex: 0 0 76px; background: none; color: #444; border-width: 0 1px 0 0; }
    .head { display: flex; align-items: center; color: #444; padding: 0 7px 0 8px; flex: none; }
    .h1 { height: 29px; } .h2 { height: 32px; padding: 3px 10px 0 8px; }
    .head .tw { width: 21px; } .head .sp { flex: 1; }
    .head .d { width: 16px; }
    .pr { display: flex; align-items: center; margin-left: 6px; }
    .tree { flex: 1; margin: 0 7px 0 8px; padding: 0; background: #fff; border-top: 1px solid #c9cccf; list-style: none; font-size: 14px; line-height: 20px; overflow: hidden; min-height: 0; }
    .tree li { display: flex; align-items: center; height: 24px; gap: 6px; padding-left: 23px; white-space: nowrap; }
    .tree li.top { padding-left: 2px; gap: 7px; }
    .tree li.top span { width: 140px; overflow: hidden; }
    .tree li.sel span { background: #b3e3fb; padding: 0 2px 0 1px; font-size: 13px; line-height: 22px; color: #333; }
    .grid { position: relative; margin: 0 7px 0 8px; background: #fff; border-top: 1px solid #c9cccf; flex: none; }
    table { border-collapse: collapse; table-layout: fixed; width: 100%; }
    th { font-weight: 400; height: 24px; padding: 2px 0 0 6px; text-align: left; border-right: 1px solid #d0d3d5; border-bottom: 1px solid #d9dcde; background: #f6f7f8; white-space: nowrap; overflow: hidden; color: #333; }
    td { height: 24px; padding: 0 0 2px; overflow: hidden; }
    td:first-child { border-right: 1px solid #dfe1e3; }
    th:last-child { border-right: 0; }
    .k1 { width: 110px; } .k2 { width: 78px; }
    .node { display: flex; align-items: center; gap: 3px; padding-left: 22px; white-space: nowrap; font-size: 14px; line-height: 20px; width: 109px; overflow: hidden; }
    .node.zh { font-size: 13px; }
    .node.top { padding-left: 1px; gap: 4px; }
    .node .tg { width: 10px; margin: 0 3px 0 -16px; }
    .vs { position: absolute; right: 1px; top: 24px; bottom: 0; width: 15px; background: #dfe2e3; display: flex; flex-direction: column; justify-content: space-between; }
    .vs button, .hs button { background: #f7f8f9; border: 1px solid #d3d6d8; width: 15px; height: 15px; }
    .vs .th { height: 97px; border-color: #bfc3c5; margin-bottom: auto; }
    .hsr { display: flex; margin: 0 7px 0 8px; flex: none; }
    .hs { display: flex; justify-content: space-between; background: #dfe2e3; height: 15px; width: 110px; }
    .hs.two { flex: 1; margin-right: 15px; }
    .hs .a { width: 60px; border-color: #bfc3c5; margin-right: auto; } .hs .b { width: 22px; border-color: #bfc3c5; margin-right: auto; }
    .stage { flex: 1; display: flex; flex-direction: column; min-width: 0; }
    .canvas { flex: 1; position: relative; overflow: hidden; background: #000f30; min-height: 0; }
    .draw { position: absolute; left: 0; top: 0; }
    .vt { position: absolute; right: 308px; top: 7px; display: flex; height: 31px; align-items: center; background: #f7f8f9; border: 1px solid #b6bcc2; padding-left: 2px; }
    .vt button { width: 26px; height: 28px; }
    .vt i { width: 8px; height: 22px; background: #dcdee0; border-left: 1px solid #aaa; }
    annotation-dialog { position: absolute; right: 0; top: 0; width: 308px; }
    .sheets { display: flex; height: 28px; background: #dedede; border-top: 3px solid #f4f4f4; flex: none; box-shadow: inset 0 1px #999; align-items: stretch; padding: 0 0 3px 3px; }
    .sheets button { width: 17px; }
    .sheets .add { width: 20px; margin: 2px 0 2px 4px; border: 1px solid #999; }
    .sheets .sheet { width: 80px; margin-top: -1px; background: #f7f7f7; border: solid #999; border-width: 0 1px 1px 0; color: #333; padding-bottom: 2px; }
    .status { display: flex; align-items: center; height: 32px; background: #eff0f1; border-top: 1px solid #fafafa; color: #444; font-size: 11px; padding-left: 6px; flex: none; }
    .status .tg { width: 22px; height: 22px; background: #e0e1e2; border: 1px solid #b5b8ba; }
    .status .ib { width: 26px; height: 22px; margin-left: 1px; }
    .status .vr { width: 1px; height: 26px; background: #b0b3b5; flex: none; }
    .status .msg { margin-left: 8px; padding-left: 3px; flex: 1; display: flex; align-items: center; gap: 2px; border-left: 1px solid #b0b3b5; height: 26px; padding-bottom: 3px; }
    .prog { width: 70px; padding-left: 4px; }
    .find { display: flex; height: 24px; border: 1px solid #b0b3b5; background: #fff; margin: 0 3px; }
    .find button:first-child { width: 22px; border-right: 1px solid #b0b3b5; }
    .find button:last-child { width: 16px; }
    .cnt { width: 97px; padding-left: 5px; flex: none; }
    .flt { width: 178px; margin-right: 17px; height: 24px; border: 1px solid #c4c7c9; position: relative; display: flex; flex: none; }
    .flt select { appearance: none; flex: 1; padding-left: 8px; }
    .flt span { position: absolute; right: 3px; top: 9px; pointer-events: none; }
    .foot { position: relative; flex: none; }
    .mark { position: absolute; right: 0; bottom: 5px; width: 211px; height: 61px; background: rgba(255, 255, 255, .2); pointer-events: none; display: grid; grid-template-columns: 70px 1fr; }
    .mark svg { grid-row: 1 / 3; }
    .mark b { font: 700 29px/36px "Noto Sans CJK SC", sans-serif; color: rgba(110, 200, 140, .75); white-space: nowrap; }
    .mark small { font-size: 15px; line-height: 20px; color: rgba(50, 40, 60, .5); margin-left: -15px; white-space: nowrap; }
  `];

  private item(it: Item) {
    if ("big" in it) {
      return html`<button class="big ${it.w} ${it.on ? "on" : ""} ${it.off ? "off" : ""}">
        <span class="ico">${lg(it.big)}</span>
        ${it.lines.map((l) => html`<span class="lab">${l}${it.drop === "inline" ? arrow() : nothing}</span>`)}
        ${it.drop === "below" ? html`<span class="low">${arrow(it.off ? "#aaa" : "#666")}</span>` : nothing}
      </button>`;
    }
    return html`<div class="col ${it.drops ? "dr" : ""}">
      ${it.col.map((c) => html`${c ? html`<button>${sm(c[0])}</button>` : html`<span></span>`}
        ${it.drops ? (c && c[1] ? html`<button>${arrow()}</button>` : html`<span></span>`) : nothing}`)}
    </div>`;
  }

  private drawing() {
    const handles = [[343, 288], [608, 288], [343, 538], [608, 538]];
    return svg`
      <path d="M343.500 288.500h265v249h-265z" stroke="#d01c2c" stroke-dasharray="16 5 6 5"/>
      <path d="M360.500 305.500h231v215h-231z" stroke="#f4fbe9"/>
      <path d="M360.500 559v-8.500h231v8.500" stroke="#f4fbe9"/><path d="M360 559.500h232" stroke="#5fd04f"/>
      <path d="M361 421.500h230M361 427.500h230" stroke="#e8f4e8" stroke-dasharray="18 3 3 3"/>
      <path d="M345 424.500h262" stroke="#2fc9d4"/><path d="M361 424.500h230" stroke="#0a4d66" stroke-dasharray="2 16"/>
      ${handles.map(([x, y]) => svg`<path d="M${x - 3} ${y - 3}h7v7h-7z" fill="#fff" stroke="none"/><path d="M${x} ${y}h1v1" stroke="#e03040"/>`)}
      <path d="M473 410h7v7h-7z" fill="#fff" stroke="none"/>
      <text x="345" y="425" font-size="34" fill="#22e6f2" stroke="none" font-family="Liberation Sans">A_23</text>
      <g font-size="7" fill="#8b94a6" stroke="none" font-family="Noto Sans, Noto Sans CJK TC">
        <text x="335" y="665">表示: 主表示</text><text x="245" y="673">比例 1.000</text><text x="291" y="673">類型: PART</text>
        <text x="335" y="673">名稱: PRT0003</text><text x="389" y="673">大小: C</text></g>`;
  }

  render() {
    const nodes: [string, string, string][] = [
      ["part", "PRT0003.PRT", "top"], ["mat", "材料", "zh open"], ["csys", "DEFAULT_CSYS", ""], ["plane", "RIGHT", ""],
      ["plane", "TOP", ""], ["plane", "FRONT", ""], ["flat", "平面 1(第一壁)", "zh"],
    ];
    const down = pic(10, 8, svg`<path d="M0 0h10l-5 8z" fill="#777" stroke="none"/>`);
    const tri = (d: string) => pic(8, 8, svg`<path d=${d} fill="#888" stroke="none"/>`);
    const pair = (n: string) => html`<span class="pr"><button>${sm(n)}</button><button class="d">${arrow()}</button></span>`;
    const L = "M6 0v8l-4-4z", R = "M2 0v8l4-4z";
    return html`
      <header class="title">
        <div class="logo">${pic(16, 16, svg`<path d="M.5.500h15v15h-15z" fill="#fff" stroke="#666"/><path d="M3.500 3.500h9v9h-9z" fill="#bcdcea" stroke="#345"/><path d="M6 3h7v7h-7z" fill="#1c86b8" stroke="none"/>`)}<i></i></div>
        <h1>DRW0001(使用中) - Creo Parametric</h1>
        <div class="wins">
          <button aria-label="最小化">${pic(12, 12, svg`<path d="M1 8.500h9" stroke="#aaa" stroke-width="2"/>`)}</button>
          <button aria-label="還原">${pic(12, 12, svg`<path d="M3.500 4v-2.500h8v5h-3M.5 4.500h8v5h-8z" stroke="#aaa" stroke-width="1.400"/>`)}</button>
          <button aria-label="關閉">${pic(12, 12, svg`<path d="M2 2l8 8M10 2l-8 8" stroke="#aaa" stroke-width="1.800"/>`)}</button>
        </div>
      </header>
      <nav class="tabs">
        ${tabs.map(([t, c]) => html`<button class="tab ${c}">${t}</button>`)}
        <div class="helps">
          <button aria-label="收合功能區">${pic(12, 8, svg`<path d="M1 6.500l5-5 5 5-2 .5-3-2.500-3 2.500z" fill="#666" stroke="none"/>`)}</button>
          <button aria-label="搜尋">${pic(16, 16, svg`<circle cx="9.500" cy="6.500" r="5" stroke="#444" stroke-width="2"/><path d="M6 10l-5 5" stroke="#444" stroke-width="2.500"/>`)}</button>
          <button aria-label="學習">${pic(16, 16, svg`<circle cx="8" cy="8" r="8" fill="#444" stroke="none"/><path d="M8 3.500l6 3-6 3-6-3zM4 8.500v3l4 2 4-2v-3l-4 2z" fill="#fff" stroke="none"/>`)}</button>
          <button>${arrow()}</button>
          <button aria-label="說明">${pic(16, 16, svg`<circle cx="8" cy="8" r="8" fill="#444" stroke="none"/>${txt(8, 13, 14, "#fff", "?")}`)}</button>
        </div>
      </nav>
      <section class="ribbon">
        ${groups.map((g) => html`<div class="group"><div class="body ${g.pad}">${g.items.map((i) => this.item(i))}</div>
          <div class="cap">${g.name}${g.drop ? arrow() : nothing}</div></div>`)}
        <div class="rest"><div class="cap"></div></div>
      </section>
      <div class="quick">${quick.map(([k, n]) => (k === "sep" ? html`<i class="sep"></i>` : html`<button class=${k}>${k[0] === "d" ? arrow(n) : sm(n)}</button>`))}</div>
      <main class="main">
        <aside class="side">
          <div class="stabs"><button class="cur">${sm("tree")}模型樹</button><button>${sm("folders")}資料...</button><button>${sm("fav")}我的...</button></div>
          <div class="head h1"><button class="tw" aria-label="收合">${down}</button>工程圖樹<span class="sp"></span>${pair("list")}</div>
          <ul class="tree">
            <li class="top">${sm("drw")}<span>DRW0001.DRW 第 1 頁</span></li>
            <li>${sm("vbox")}<span>VIEW_TEMPLATE_1</span></li>
            <li>${sm("vbox")}<span>new_view_4</span></li>
            <li>${sm("proj")}<span>VIEW_TEMPLATE_3</span></li>
            <li class="sel">${sm("proj")}<span>頂部_6</span></li>
          </ul>
          <div class="head h2"><button class="tw" aria-label="收合">${down}</button>模型樹${pair("solid")}${pair("tools")}${pair("list")}<span class="sp"></span><button>${sm("treeEye")}</button></div>
          <div class="grid">
            <table><thead><tr><th class="k1"></th><th class="k2">材料</th><th>密度</th></tr></thead>
              <tbody>${nodes.map(([i, t, c]) => html`<tr><td><div class="node ${c}">${c.includes("open") ? html`<button class="tg" aria-label="展開">${tri(R)}</button>` : nothing}${sm(i)}<span>${t}</span></div></td><td></td><td></td></tr>`)}</tbody></table>
            <div class="vs"><button>${tri("M0 6h8l-4-4z")}</button><button class="th" aria-label="捲動"></button><button>${tri("M0 2h8l-4 4z")}</button></div>
          </div>
          <div class="hsr">
            <div class="hs"><button>${tri(L)}</button><button class="a" aria-label="捲動"></button><button>${tri(R)}</button></div>
            <div class="hs two"><button>${tri(L)}</button><button class="b" aria-label="捲動"></button><button>${tri(R)}</button></div>
          </div>
        </aside>
        <section class="stage">
          <div class="canvas">
            <svg class="draw" width="788" height="484" viewBox="236 191 788 484" fill="none">${this.drawing()}</svg>
            <div class="vt">${viewTools.map((v) => html`<button>${pic(20, 20, v)}</button>`)}<i></i></div>
            <annotation-dialog></annotation-dialog>
          </div>
          <div class="sheets">
            <button>${pic(12, 8, svg`<path d="M6 0v8l-6-4zM12 0v8l-6-4z" fill="#555" stroke="none"/>`)}</button>
            <button>${pic(8, 8, svg`<path d="M7 0v8l-6-4z" fill="#aaa" stroke="none"/>`)}</button>
            <button>${pic(8, 8, svg`<path d="M1 0v8l6-4z" fill="#aaa" stroke="none"/>`)}</button>
            <button>${pic(12, 8, svg`<path d="M0 0v8l6-4zM6 0v8l6-4z" fill="#555" stroke="none"/>`)}</button>
            <button class="add">+</button><button class="sheet">Sheet 1</button>
          </div>
        </section>
      </main>
      <footer class="foot">
        <div class="status">
          <button class="tg">${sm("tree")}</button>
          <button class="ib">${pic(18, 18, svg`<circle cx="9" cy="10" r="6.500" fill="#4d9cc6" stroke="#2d6f96"/><path d="M5 8c2-3 4 0 6-1s1 3-1 4-1 4-3 3 1-3-2-6z" fill="#cfeaf6" stroke="none"/><path d="M1 15c1 4 17-8 15-13" stroke="#999" stroke-width="1.300"/>`)}</button>
          <button class="ib">${pic(18, 18, svg`<path d="M1.500 1.500h15v15h-15z" fill="#e3eff5" stroke="#6d8fa3"/>`)}</button>
          <div class="msg">${pic(12, 12, svg`<path d="M1 4.500h5v-3l5 4.500-5 4.500v-3h-5z" fill="#3f9fd0" stroke="#1d4f70"/>`)}選取工程圖視圖的「中心點」。</div>
          <i class="vr"></i>
          <div class="prog">${pic(30, 12, svg`<circle cx="6" cy="6" r="5.500" fill="#cbcdce" stroke="none"/><circle cx="16" cy="6" r="3" fill="#d5d7d8" stroke="none"/><circle cx="24" cy="6" r="3" fill="#d5d7d8" stroke="none"/>`)}</div>
          <i class="vr"></i>
          <div class="find"><button aria-label="尋找">${pic(18, 16, svg`<path d="M4 2h3v3l1 2v7h-6v-5zM14 2h-3v3l-1 2v7h6v-5z" fill="#3d3d3d" stroke="#333"/><path d="M7 7h4" stroke="#333" stroke-width="3"/><path d="M4 7v5M13 7v5" stroke="#999"/>`)}</button><button>${arrow()}</button></div>
          <i class="vr"></i>
          <div class="cnt">選取了1 個</div>
          <div class="flt"><select aria-label="篩選"><option>全部</option></select><span>${arrow("#888")}</span></div>
        </div>
        <task-bar></task-bar>
        <div class="mark">${pic(66, 60, svg`<path d="M6 24c-8-26 22-30 25-4 2 12 3 14 7 17M4 16c2 16 14 28 28 29" stroke="#8fa3b5" stroke-width="3" opacity=".8"/><path d="M38 22c20-6 24 22 12 30-8 6-20 5-26-1" stroke="#d4404c" stroke-width="3" opacity=".6"/>`)}<b>野火论坛</b><small>www.proewildfire.cn</small></div>
      </footer>`;
  }
}
